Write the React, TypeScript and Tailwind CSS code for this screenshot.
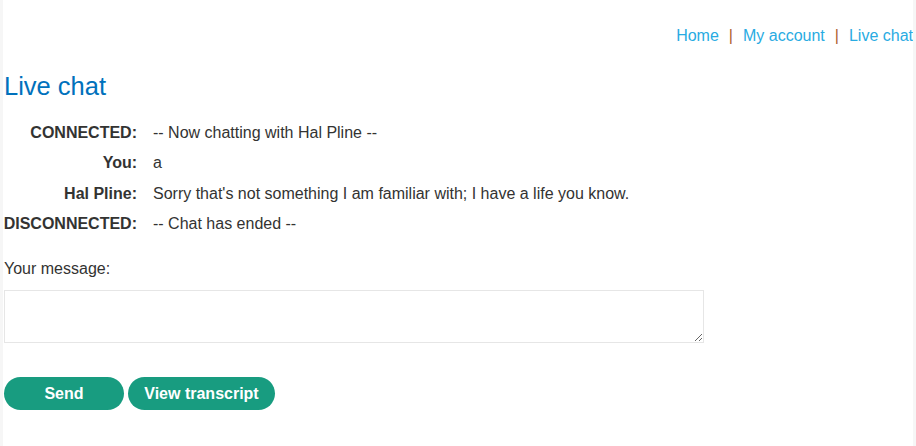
import React from 'react';

const rows = [
  { who: 'CONNECTED:', text: '-- Now chatting with Hal Pline --' },
  { who: 'You:', text: 'a' },
  { who: 'Hal Pline:', text: "Sorry that's not something I am familiar with; I have a life you know." },
  { who: 'DISCONNECTED:', text: '-- Chat has ended --' },
];

export default function App() {
  return (
    <div className="flex w-[916px] h-[446px] bg-white text-[#333332] font-['Liberation_Sans',Arial,sans-serif] text-[16px]">
      <div className="w-[3px] bg-[#f6f6f6]" />
      <div className="flex-1 flex flex-col pl-[1px]">
        {/* Top nav */}
        <div className="flex justify-end items-center pt-[25px] h-[47px] leading-[22px] text-[16px]">
          <a className="text-[#29abe2]">Home</a>
          <span className="px-[10px] text-[#ae5c2c]">|</span>
          <a className="text-[#29abe2]">My account</a>
          <span className="px-[10px] text-[#ae5c2c]">|</span>
          <a className="text-[#29abe2]">Live chat</a>
        </div>

        <h1 className="mt-[24px] text-[25.5px] leading-[30px] text-[#0071bc]">Live chat</h1>

        {/* Chat log */}
        <div className="mt-[17px] grid grid-cols-[133px_1fr] gap-x-[16px]">
          {rows.map((r) => (
            <React.Fragment key={r.who}>
              <div className="h-[30.33px] flex items-center justify-end font-bold">{r.who}</div>
              <div className="h-[30.33px] flex items-center">{r.text}</div>
            </React.Fragment>
          ))}
        </div>

        <label className="mt-[20px] leading-[20px]">Your message:</label>
        <textarea className="mt-[11px] w-[700px] h-[53px] border border-[#e6e6e6] bg-white outline-none" />

        <div className="mt-[34px] flex gap-[4px]">
          <button className="w-[120px] h-[33px] rounded-[17px] bg-[#189c80] text-white font-bold">Send</button>
          <button className="w-[147px] h-[33px] rounded-[17px] bg-[#189c80] text-white font-bold">View transcript</button>
        </div>
      </div>
      <div className="w-[3px] bg-[#f6f6f6]" />
    </div>
  );
}
